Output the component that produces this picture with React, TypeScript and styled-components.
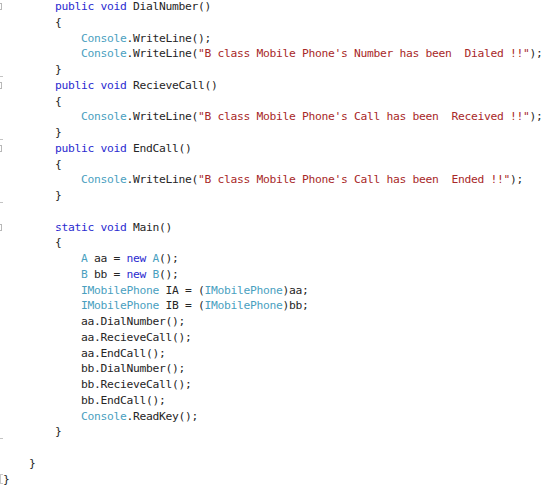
import React from "react";
import styled, { createGlobalStyle } from "styled-components";

const Global = createGlobalStyle`
  html, body {
    margin: 0;
    padding: 0;
    background: #ffffff;
  }
  body {
    width: 550px;
    height: 497px;
    overflow: hidden;
  }
`;

type Kind = "kw" | "type" | "str" | "plain";
type Tok = [Kind, string];
type Marker = "none" | "box" | "tick" | "end";
type LineData = { indent: number; toks: Tok[]; marker?: Marker };

const Editor = styled.div`
  margin-top: -1px;
  display: flex;
  flex-direction: column;
  font-family: "DejaVu Sans Mono", "Liberation Mono", monospace;
  font-size: 11.3px;
  letter-spacing: -0.3px;
  line-height: 15.75px;
  color: #2a2a2a;
`;

const Row = styled.div`
  display: flex;
  align-items: stretch;
  height: 15.75px;
`;

const Gutter = styled.div`
  position: relative;
  width: 3px;
  flex: none;
`;

const Box = styled.span`
  position: absolute;
  left: -4px;
  top: 4px;
  width: 6px;
  height: 7px;
  border: 1px solid #b8b8b8;
  box-sizing: border-box;
`;

const Tick = styled.span`
  position: absolute;
  left: 0;
  bottom: 1px;
  width: 3px;
  height: 1px;
  background: #c4c4c4;
`;

const EndMark = styled.span`
  position: absolute;
  left: 0;
  top: 2px;
  width: 3px;
  height: 10px;
  border: 1px solid #c8c8c8;
  border-right: none;
  box-sizing: border-box;
`;

const Code = styled.div<{ $indent: number }>`
  white-space: pre;
  padding-left: ${(p) => p.$indent * 6.5}px;
`;

const colors: Record<Kind, string> = {
  kw: "#2b2bd0",
  type: "#4a9fbf",
  str: "#a82828",
  plain: "#262626",
};

const Token = styled.span<{ $kind: Kind }>`
  color: ${(p) => colors[p.$kind]};
`;

const P = (s: string): Tok => ["plain", s];
const K = (s: string): Tok => ["kw", s];
const T = (s: string): Tok => ["type", s];
const S = (s: string): Tok => ["str", s];

const lines: LineData[] = [
  { indent: 8, toks: [K("public"), P(" "), K("void"), P(" DialNumber()")], marker: "box" },
  { indent: 8, toks: [P("{")] },
  { indent: 12, toks: [T("Console"), P(".WriteLine();")] },
  { indent: 12, toks: [T("Console"), P(".WriteLine("), S("\"B class Mobile Phone's Number has been  Dialed !!\""), P(");")] },
  { indent: 8, toks: [P("}")], marker: "tick" },
  { indent: 8, toks: [K("public"), P(" "), K("void"), P(" RecieveCall()")], marker: "box" },
  { indent: 8, toks: [P("{")] },
  { indent: 12, toks: [T("Console"), P(".WriteLine("), S("\"B class Mobile Phone's Call has been  Received !!\""), P(");")] },
  { indent: 8, toks: [P("}")], marker: "tick" },
  { indent: 8, toks: [K("public"), P(" "), K("void"), P(" EndCall()")], marker: "box" },
  { indent: 8, toks: [P("{")] },
  { indent: 12, toks: [T("Console"), P(".WriteLine("), S("\"B class Mobile Phone's Call has been  Ended !!\""), P(");")] },
  { indent: 8, toks: [P("}")], marker: "tick" },
  { indent: 0, toks: [P("")] },
  { indent: 8, toks: [K("static"), P(" "), K("void"), P(" Main()")], marker: "box" },
  { indent: 8, toks: [P("{")] },
  { indent: 12, toks: [T("A"), P(" aa = "), K("new"), P(" "), T("A"), P("();")] },
  { indent: 12, toks: [T("B"), P(" bb = "), K("new"), P(" "), T("B"), P("();")] },
  { indent: 12, toks: [T("IMobilePhone"), P(" IA = ("), T("IMobilePhone"), P(")aa;")] },
  { indent: 12, toks: [T("IMobilePhone"), P(" IB = ("), T("IMobilePhone"), P(")bb;")] },
  { indent: 12, toks: [P("aa.DialNumber();")] },
  { indent: 12, toks: [P("aa.RecieveCall();")] },
  { indent: 12, toks: [P("aa.EndCall();")] },
  { indent: 12, toks: [P("bb.DialNumber();")] },
  { indent: 12, toks: [P("bb.RecieveCall();")] },
  { indent: 12, toks: [P("bb.EndCall();")] },
  { indent: 12, toks: [T("Console"), P(".ReadKey();")] },
  { indent: 8, toks: [P("}")], marker: "tick" },
  { indent: 0, toks: [P("")] },
  { indent: 4, toks: [P("}")] },
  { indent: 0, toks: [P("}")], marker: "end" },
];

function MarkerView({ m }: { m?: Marker }) {
  if (m === "box") return <Box />;
  if (m === "tick") return <Tick />;
  if (m === "end") return <EndMark />;
  return null;
}

export default function App() {
  return (
    <>
      <Global />
      <Editor>
        {lines.map((l, i) => (
          <Row key={i}>
            <Gutter>
              <MarkerView m={l.marker} />
            </Gutter>
            <Code $indent={l.indent}>
              {l.toks.map((t, j) => (
                <Token key={j} $kind={t[0]}>
                  {t[1]}
                </Token>
              ))}
            </Code>
          </Row>
        ))}
      </Editor>
    </>
  );
}
